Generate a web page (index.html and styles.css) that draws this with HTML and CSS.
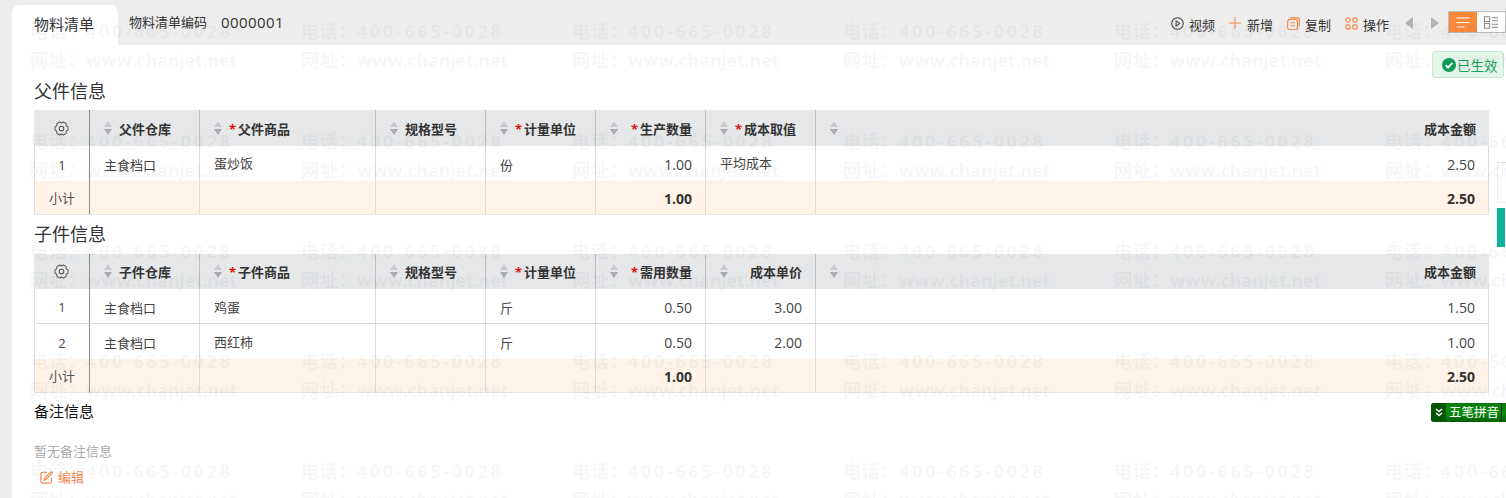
FILE: index.html
```html
<!DOCTYPE html>
<html lang="zh-CN">
<head>
<meta charset="utf-8">
<title>物料清单</title>
<link rel="stylesheet" href="styles.css">
</head>
<body>
<svg class="defs" width="0" height="0" aria-hidden="true">
  <symbol id="sort" viewBox="0 0 8 14"><path d="M4 0l4 6H0z" fill="#c8c9cc"/><path d="M4 14l4-6H0z" fill="#a9abaf"/></symbol>
  <symbol id="gear" viewBox="0 0 16 16"><path d="M14.990 6.260L14.990 9.740L13.020 10.900L13 13.180L9.980 14.920L8 13.800L6.020 14.920L3 13.180L2.980 10.900L1.010 9.740L1.010 6.260L2.980 5.100L3 2.820L6.020 1.080L8 2.200L9.980 1.080L13 2.820L13.020 5.100Z" fill="none" stroke="#555" stroke-width="1.100" stroke-linejoin="round"/><circle cx="8" cy="8" r="2.500" fill="none" stroke="#555" stroke-width="1.100"/></symbol>
</svg>
<div class="page">
  <header class="topbar">
    <div class="tab">物料清单</div>
    <div class="code"><span class="code-label">物料清单编码</span><span class="code-value">0000001</span></div>
    <nav class="tools">
      <span class="tool">
        <svg class="tool-icon" viewBox="0 0 14 14"><circle cx="7" cy="7" r="6.200" fill="none" stroke="#444" stroke-width="1.200"/><path d="M5.500 4.200l4 2.800-4 2.800z" fill="none" stroke="#444" stroke-width="1.100"/></svg>视频
      </span>
      <span class="tool">
        <svg class="tool-icon" viewBox="0 0 14 14"><path d="M6.500 0v13M0 6.500h13" stroke="#f5803e" stroke-width="1" fill="none"/></svg>新增
      </span>
      <span class="tool">
        <svg class="tool-icon" viewBox="0 0 14 14"><rect x=".7" y="2.500" width="10.600" height="11" rx="2.500" fill="none" stroke="#f58a4c" stroke-width="1.300"/><path d="M3.500.7h7A2.800 2.800 0 0 1 13.300 3.500V10" fill="none" stroke="#f58a4c" stroke-width="1.300"/><path d="M3.500 6.200h5M3.500 9.500h5" stroke="#f58a4c" stroke-width="1.100"/></svg>复制
      </span>
      <span class="tool">
        <svg class="tool-icon" viewBox="0 0 14 14"><g fill="none" stroke="#f58a4c" stroke-width="1.300"><circle cx="3.300" cy="3.300" r="2.400"/><circle cx="10.700" cy="3.300" r="2.400"/><circle cx="3.300" cy="10.700" r="2.400"/><circle cx="10.700" cy="10.700" r="2.400"/></g></svg>操作
      </span>
      <span class="pager">
        <svg class="pager-icon" viewBox="0 0 8 12"><path d="M8 0v12L0 6z" fill="#b4b4b4"/></svg>
        <svg class="pager-icon" viewBox="0 0 8 12"><path d="M0 0v12l8-6z" fill="#b4b4b4"/></svg>
      </span>
      <span class="view-toggle">
        <span class="view view-on"><svg class="view-icon" viewBox="0 0 14 12"><path d="M.5 1.500h13M.5 6h13M.5 10.500h8" stroke="#fff" stroke-width="1.200" fill="none"/></svg></span>
        <span class="view"><svg class="view-icon" viewBox="0 0 16 14"><g fill="none" stroke="#777"><rect x=".5" y=".5" width="6" height="5.500"/><rect x=".5" y="8" width="6" height="5.500"/><path d="M9 1.500h7M9 5h7M9 9h7M9 12.500h7"/></g></svg></span>
      </span>
    </nav>
  </header>

  <main class="content">
    <h2 class="section-title section-title-first">父件信息</h2>
    <table class="grid grid-parent">
      <colgroup><col class="c1"><col class="c2"><col class="c3"><col class="c4"><col class="c5"><col class="c6"><col class="c7"><col></colgroup>
      <thead>
        <tr>
          <th class="center"><svg class="gear"><use href="#gear"/></svg></th>
          <th><span class="th"><svg class="sort"><use href="#sort"/></svg><span class="label">父件仓库</span></span></th>
          <th><span class="th"><svg class="sort"><use href="#sort"/></svg><span class="label"><i class="req">*</i>父件商品</span></span></th>
          <th><span class="th"><svg class="sort"><use href="#sort"/></svg><span class="label">规格型号</span></span></th>
          <th><span class="th"><svg class="sort"><use href="#sort"/></svg><span class="label"><i class="req">*</i>计量单位</span></span></th>
          <th><span class="th"><svg class="sort"><use href="#sort"/></svg><span class="label end"><i class="req">*</i>生产数量</span></span></th>
          <th><span class="th"><svg class="sort"><use href="#sort"/></svg><span class="label"><i class="req">*</i>成本取值</span></span></th>
          <th><span class="th"><svg class="sort"><use href="#sort"/></svg><span class="label end">成本金额</span></span></th>
        </tr>
      </thead>
      <tbody>
        <tr><td class="center">1</td><td>主食档口</td><td class="raised">蛋炒饭</td><td></td><td>份</td><td class="num">1.00</td><td class="raised">平均成本</td><td class="num">2.50</td></tr>
        <tr class="sub"><td class="center">小计</td><td></td><td></td><td></td><td></td><td class="num">1.00</td><td></td><td class="num">2.50</td></tr>
      </tbody>
    </table>

    <h2 class="section-title">子件信息</h2>
    <table class="grid">
      <colgroup><col class="c1"><col class="c2"><col class="c3"><col class="c4"><col class="c5"><col class="c6"><col class="c7"><col></colgroup>
      <thead>
        <tr>
          <th class="center"><svg class="gear"><use href="#gear"/></svg></th>
          <th><span class="th"><svg class="sort"><use href="#sort"/></svg><span class="label">子件仓库</span></span></th>
          <th><span class="th"><svg class="sort"><use href="#sort"/></svg><span class="label"><i class="req">*</i>子件商品</span></span></th>
          <th><span class="th"><svg class="sort"><use href="#sort"/></svg><span class="label">规格型号</span></span></th>
          <th><span class="th"><svg class="sort"><use href="#sort"/></svg><span class="label"><i class="req">*</i>计量单位</span></span></th>
          <th><span class="th"><svg class="sort"><use href="#sort"/></svg><span class="label end"><i class="req">*</i>需用数量</span></span></th>
          <th><span class="th"><svg class="sort"><use href="#sort"/></svg><span class="label end">成本单价</span></span></th>
          <th><span class="th"><svg class="sort"><use href="#sort"/></svg><span class="label end">成本金额</span></span></th>
        </tr>
      </thead>
      <tbody>
        <tr><td class="center">1</td><td>主食档口</td><td class="raised">鸡蛋</td><td></td><td>斤</td><td class="num">0.50</td><td class="num">3.00</td><td class="num">1.50</td></tr>
        <tr><td class="center">2</td><td>主食档口</td><td class="raised">西红柿</td><td></td><td>斤</td><td class="num">0.50</td><td class="num">2.00</td><td class="num">1.00</td></tr>
        <tr class="sub"><td class="center">小计</td><td></td><td></td><td></td><td></td><td class="num">1.00</td><td></td><td class="num">2.50</td></tr>
      </tbody>
    </table>

    <h3 class="note-title">备注信息</h3>
    <p class="note-empty">暂无备注信息</p>
    <a class="edit"><svg class="edit-icon" viewBox="0 0 14 14"><path d="M12.500 7.500V11a2 2 0 0 1-2 2H3a2 2 0 0 1-2-2V3.500a2 2 0 0 1 2-2h4.500" fill="none" stroke="#f58a4c" stroke-width="1.300"/><path d="M12 .8l1.300 1.300-6.800 7-2 .7.500-2.100z" fill="none" stroke="#f58a4c" stroke-width="1.200"/></svg>编辑</a>
  </main>
</div>

<span class="status">
  <svg class="status-icon" viewBox="0 0 14 14"><circle cx="7" cy="7" r="7" fill="#0f9d58"/><path d="M3.600 7.200l2.400 2.400 4.400-4.700" fill="none" stroke="#fff" stroke-width="1.900"/></svg>已生效
</span>
<div class="side-box"></div>
<div class="side-teal"></div>
<div class="ime">
  <span class="ime-arrow"><svg class="ime-chevron" viewBox="0 0 8 9"><path d="M1 1l3 2.500L7 1M1 5l3 2.500L7 5" fill="none" stroke="#fff" stroke-width="1.500"/></svg></span>
  <span class="ime-text">五笔拼音</span>
</div>

<div class="watermark" aria-hidden="true">
  <div class="wm"><span class="wm-tel"><i>电话：</i>400-665-0028</span><span class="wm-web"><i>网址：</i>www.chanjet.net</span></div>
  <div class="wm"><span class="wm-tel"><i>电话：</i>400-665-0028</span><span class="wm-web"><i>网址：</i>www.chanjet.net</span></div>
  <div class="wm"><span class="wm-tel"><i>电话：</i>400-665-0028</span><span class="wm-web"><i>网址：</i>www.chanjet.net</span></div>
  <div class="wm"><span class="wm-tel"><i>电话：</i>400-665-0028</span><span class="wm-web"><i>网址：</i>www.chanjet.net</span></div>
  <div class="wm"><span class="wm-tel"><i>电话：</i>400-665-0028</span><span class="wm-web"><i>网址：</i>www.chanjet.net</span></div>
  <div class="wm"><span class="wm-tel"><i>电话：</i>400-665-0028</span><span class="wm-web"><i>网址：</i>www.chanjet.net</span></div>
  <div class="wm"><span class="wm-tel"><i>电话：</i>400-665-0028</span><span class="wm-web"><i>网址：</i>www.chanjet.net</span></div>
  <div class="wm"><span class="wm-tel"><i>电话：</i>400-665-0028</span><span class="wm-web"><i>网址：</i>www.chanjet.net</span></div>
  <div class="wm"><span class="wm-tel"><i>电话：</i>400-665-0028</span><span class="wm-web"><i>网址：</i>www.chanjet.net</span></div>
  <div class="wm"><span class="wm-tel"><i>电话：</i>400-665-0028</span><span class="wm-web"><i>网址：</i>www.chanjet.net</span></div>
  <div class="wm"><span class="wm-tel"><i>电话：</i>400-665-0028</span><span class="wm-web"><i>网址：</i>www.chanjet.net</span></div>
  <div class="wm"><span class="wm-tel"><i>电话：</i>400-665-0028</span><span class="wm-web"><i>网址：</i>www.chanjet.net</span></div>
  <div class="wm"><span class="wm-tel"><i>电话：</i>400-665-0028</span><span class="wm-web"><i>网址：</i>www.chanjet.net</span></div>
  <div class="wm"><span class="wm-tel"><i>电话：</i>400-665-0028</span><span class="wm-web"><i>网址：</i>www.chanjet.net</span></div>
  <div class="wm"><span class="wm-tel"><i>电话：</i>400-665-0028</span><span class="wm-web"><i>网址：</i>www.chanjet.net</span></div>
  <div class="wm"><span class="wm-tel"><i>电话：</i>400-665-0028</span><span class="wm-web"><i>网址：</i>www.chanjet.net</span></div>
  <div class="wm"><span class="wm-tel"><i>电话：</i>400-665-0028</span><span class="wm-web"><i>网址：</i>www.chanjet.net</span></div>
  <div class="wm"><span class="wm-tel"><i>电话：</i>400-665-0028</span><span class="wm-web"><i>网址：</i>www.chanjet.net</span></div>
  <div class="wm"><span class="wm-tel"><i>电话：</i>400-665-0028</span><span class="wm-web"><i>网址：</i>www.chanjet.net</span></div>
  <div class="wm"><span class="wm-tel"><i>电话：</i>400-665-0028</span><span class="wm-web"><i>网址：</i>www.chanjet.net</span></div>
  <div class="wm"><span class="wm-tel"><i>电话：</i>400-665-0028</span><span class="wm-web"><i>网址：</i>www.chanjet.net</span></div>
  <div class="wm"><span class="wm-tel"><i>电话：</i>400-665-0028</span><span class="wm-web"><i>网址：</i>www.chanjet.net</span></div>
  <div class="wm"><span class="wm-tel"><i>电话：</i>400-665-0028</span><span class="wm-web"><i>网址：</i>www.chanjet.net</span></div>
  <div class="wm"><span class="wm-tel"><i>电话：</i>400-665-0028</span><span class="wm-web"><i>网址：</i>www.chanjet.net</span></div>
  <div class="wm"><span class="wm-tel"><i>电话：</i>400-665-0028</span><span class="wm-web"><i>网址：</i>www.chanjet.net</span></div>
  <div class="wm"><span class="wm-tel"><i>电话：</i>400-665-0028</span><span class="wm-web"><i>网址：</i>www.chanjet.net</span></div>
  <div class="wm"><span class="wm-tel"><i>电话：</i>400-665-0028</span><span class="wm-web"><i>网址：</i>www.chanjet.net</span></div>
  <div class="wm"><span class="wm-tel"><i>电话：</i>400-665-0028</span><span class="wm-web"><i>网址：</i>www.chanjet.net</span></div>
  <div class="wm"><span class="wm-tel"><i>电话：</i>400-665-0028</span><span class="wm-web"><i>网址：</i>www.chanjet.net</span></div>
  <div class="wm"><span class="wm-tel"><i>电话：</i>400-665-0028</span><span class="wm-web"><i>网址：</i>www.chanjet.net</span></div>
</div>
</body>
</html>
```

FILE: styles.css
```css
* { box-sizing: border-box; }
html, body { height: 100%; }
body {
  margin: 0;
  position: relative;
  overflow: hidden;
  background: #ededed;
  color: #333;
  font-family: "Open Sans", "Noto Sans CJK SC", sans-serif;
  font-size: 13px;
}
.defs { position: absolute; }
.page {
  height: 100%;
  display: flex;
  flex-direction: column;
  padding-left: 12px;
}
.topbar {
  flex: none;
  height: 45px;
  display: flex;
  align-items: flex-start;
}
.tab {
  width: 106px;
  height: 40px;
  margin-top: 5px;
  padding-left: 22px;
  background: #fff;
  border-radius: 8px 8px 0 0;
  font-size: 15px;
  line-height: 38px;
}
.code {
  margin-left: 11px;
  height: 45px;
  display: flex;
  align-items: center;
  gap: 14px;
  padding-bottom: 2px;
}
.code-value { font-size: 15px; letter-spacing: 0.400px; }
.tools {
  margin-left: auto;
  height: 45px;
  display: flex;
  align-items: center;
}
.tool {
  display: flex;
  align-items: center;
  gap: 5px;
  margin: 3px 14px 0 0;
}
.tool-icon { width: 13px; height: 13px; margin-top: -1px; }
.pager {
  display: flex;
  gap: 18px;
  margin: 0 9px 0 2px;
}
.pager-icon { width: 8px; height: 12px; }
.view-toggle {
  display: flex;
  width: 58px;
  height: 22px;
  margin-bottom: 1px;
  border: 1px solid #bbb;
  background: #fff;
}
.view {
  flex: 1;
  display: flex;
  align-items: center;
  justify-content: center;
}
.view-on { background: #f98a3c; }
.view-icon { width: 14px; height: 13px; }

.content {
  flex: 1;
  background: #fff;
  padding: 26px 17px 0 22px;
}
.section-title {
  margin: 0;
  height: 39px;
  font-size: 18px;
  font-weight: 400;
  line-height: 39px;
  color: #333;
}
.section-title-first { line-height: 41px; }
.grid {
  width: 100%;
  table-layout: fixed;
  border-collapse: separate;
  border-spacing: 0;
}
.c1 { width: 56px; }
.c2 { width: 110px; }
.c3 { width: 176px; }
.c4, .c5, .c6, .c7 { width: 110px; }
.grid th {
  height: 35px;
  padding: 0 13px 0 14px;
  background: #e6e7e9;
  border-right: 1px solid #bdbec0;
  font-size: 13px;
  font-weight: 700;
  text-align: left;
  color: #333;
}
.grid-parent th { height: 36px; }
.grid th:last-child { border-right: 0; }
.grid th:first-child { padding: 0; }
.grid th:first-child, .grid td:first-child { border-right-color: #8a8a8a; }
.grid td {
  height: 35px;
  padding: 2px 13px 0 14px;
  border-right: 1px solid #dcdcdc;
  border-bottom: 1px solid #dcdcdc;
  color: #444;
}
.grid td.raised { padding-top: 0; }
.grid-parent td.raised { padding-bottom: 2px; }
.grid td:first-child { border-left: 1px solid #dcdcdc; padding-left: 0; padding-right: 0; }
.grid tr:has(+ .sub) td { border-bottom: 0; }
.grid .sub td { height: 34px; background: #fef3e6; border-bottom-color: #e9e6e1; }
.grid .sub td:first-child { padding-top: 0; color: #555; }
.grid .sub .num { font-weight: 700; color: #333; }
.grid .center { text-align: center; }
.grid .num { text-align: right; font-size: 14px; }
.gear { width: 15px; height: 15px; display: block; margin: 0 auto; }
.th { display: flex; align-items: center; }
.sort { width: 8px; height: 14px; flex: none; margin-right: 7px; margin-top: -1px; }
.label { white-space: nowrap; }
.end { margin-left: auto; }
.req {
  display: inline-block;
  width: 9px;
  color: #e01010;
  font-style: normal;
  font-weight: 700;
}
.note-title {
  margin: 0;
  height: 36px;
  font-size: 15px;
  font-weight: 400;
  line-height: 36px;
  color: #111;
}
.note-empty {
  margin: 11px 0 0;
  line-height: 22px;
  color: #aaa;
}
.edit {
  margin: 4px 0 0 6px;
  display: inline-flex;
  align-items: center;
  gap: 5px;
  line-height: 22px;
  color: #f08a50;
}
.edit-icon { width: 13px; height: 13px; }

.status {
  position: absolute;
  left: 1432px;
  top: 51px;
  width: 72px;
  height: 27px;
  display: flex;
  align-items: center;
  padding-left: 9px;
  gap: 1px;
  background: #e4f5e9;
  border: 1px solid #c4e8d0;
  border-radius: 3px;
  color: #1aa35a;
  font-size: 13.500px;
}
.status-icon { width: 14px; height: 14px; }
.side-box {
  position: absolute;
  left: 1497px;
  top: 162px;
  width: 9px;
  height: 41px;
  background: #fff;
  border-top: 1px solid #ddd;
  border-left: 1px solid #eee;
  border-bottom: 1px solid #eee;
}
.side-teal {
  position: absolute;
  left: 1497px;
  top: 208px;
  width: 9px;
  height: 39px;
  background: #0bb19a;
  border-right: 1px solid #fff;
}
.ime {
  position: absolute;
  left: 1431px;
  top: 403px;
  width: 75px;
  height: 19px;
  display: flex;
  align-items: center;
  background: linear-gradient(#0a7a0a, #0d8c0d 50%, #066006);
  border-radius: 3px 0 0 3px;
  color: #fff;
  font-size: 12.500px;
  line-height: 19px;
}
.ime-arrow {
  width: 15px;
  height: 19px;
  display: flex;
  align-items: center;
  justify-content: center;
  background: #045604;
  border-radius: 3px 0 0 3px;
}
.ime-chevron { width: 8px; height: 9px; }
.ime-text {
  padding-left: 3px;
  width: 56px;
  border-right: 1px solid #033;
}

.watermark {
  position: absolute;
  inset: 0;
  overflow: hidden;
  padding: 17px 0 0 30px;
  display: grid;
  grid-template-columns: repeat(6, 271px);
  grid-auto-rows: 110px;
  pointer-events: none;
}
.wm { display: flex; flex-direction: column; }
.wm span {
  height: 29px;
  line-height: 29px;
  white-space: nowrap;
  font-size: 18px;
  font-weight: 700;
  color: rgba(0, 0, 0, 0.05);
}
.wm i { font-style: normal; letter-spacing: 0.700px; }
.wm .wm-tel { letter-spacing: 2.650px; }
.wm .wm-web { letter-spacing: -0.250px; }
```
